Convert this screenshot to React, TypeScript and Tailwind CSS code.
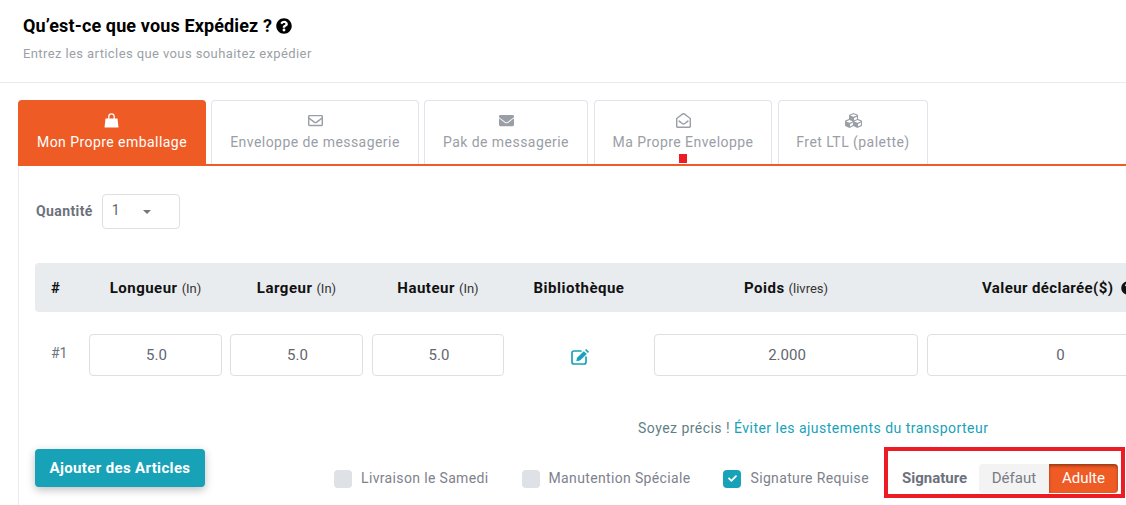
import { FaCheck, FaCubes, FaEnvelope, FaQuestionCircle, FaRegEnvelope, FaRegEnvelopeOpen } from "react-icons/fa";
import type { ReactNode } from "react";

function BagIcon() {
  return (
    <svg width="15" height="15" viewBox="0 0 15 15" fill="none" className="-ml-[1px]">
      <path d="M4.8 6V3.6a2.7 2.7 0 0 1 5.4 0V6" stroke="currentColor" strokeWidth="1.3" />
      <path d="M1.5 5.5h12l1 9H.5z" fill="currentColor" />
    </svg>
  );
}

function EditIcon() {
  return (
    <svg width="20" height="16" viewBox="0 0 20 16" fill="none">
      <path
        d="M11 2H4a2 2 0 0 0-2 2v9a2 2 0 0 0 2 2h10a2 2 0 0 0 2-2V8"
        stroke="currentColor"
        strokeWidth="1.7"
        strokeLinecap="round"
      />
      <path d="M13.8 2.2 16.8 5 10 11.6l-3.7.7.7-3.6z" fill="currentColor" />
      <path d="M15 1l1.2-1 2.8 2.7-1.1 1.2z" fill="currentColor" />
    </svg>
  );
}

const tabs: { label: string; icon: ReactNode; width: string; active?: boolean }[] = [
  { label: "Mon Propre emballage", icon: <BagIcon />, width: "w-[188px]", active: true },
  { label: "Enveloppe de messagerie", icon: <FaRegEnvelope size={15} />, width: "w-[208px]" },
  { label: "Pak de messagerie", icon: <FaEnvelope size={15} />, width: "w-[164px] mr-[1px]" },
  { label: "Ma Propre Enveloppe", icon: <FaRegEnvelopeOpen size={15} />, width: "w-[178px] mr-[1px]" },
  { label: "Fret LTL (palette)", icon: <FaCubes size={17} />, width: "w-[150px]" },
];

function Tab({ label, icon, width, active }: { label: string; icon: ReactNode; width: string; active?: boolean }) {
  return (
    <div
      className={`${width} h-[64px] shrink-0 rounded-t-[4px] flex flex-col items-center text-[14px] tracking-[0.45px] ${
        active ? "pt-[12px] bg-[#ef5b25] text-white" : "pt-[11px] border border-b-0 border-[#e1e4ea] text-[#9a9ea6]"
      }`}
    >
      <div className="h-[17px] flex items-center">{icon}</div>
      <div className="mt-[3px] leading-[20px] whitespace-nowrap">{label}</div>
    </div>
  );
}

function HeadCell({ title, unit, width }: { title: string; unit?: string; width: string }) {
  return (
    <div className={`${width} shrink-0 text-center whitespace-nowrap text-[15px] tracking-[0.5px] font-bold text-[#111]`}>
      {title}
      {unit && <span className="ml-1 text-[13px] tracking-normal font-normal text-[#333]">{unit}</span>}
    </div>
  );
}

function Field({ value, width }: { value: string; width: string }) {
  return (
    <div className={`${width} h-[42px] shrink-0 rounded-[4px] border border-[#dfdfdf] flex items-center justify-center text-[15px] text-[#5f6670]`}>
      {value}
    </div>
  );
}

function Check({ label, checked }: { label: string; checked?: boolean }) {
  return (
    <div className="flex items-center gap-[9px] whitespace-nowrap text-[14px] tracking-[0.35px] text-[#7d828c]">
      <div
        className={`w-[18px] h-[18px] rounded-[4px] flex items-center justify-center text-white ${
          checked ? "bg-[#17a2b8]" : "bg-[#dee1e6]"
        }`}
      >
        {checked && <FaCheck size={9} />}
      </div>
      {label}
    </div>
  );
}

export default function App() {
  return (
    <div className="relative w-[1126px] h-[505px] overflow-hidden bg-white font-['Roboto',sans-serif]">
      {/* Header */}
      <div className="h-[83px] border-b border-[#e9ebee] pl-[23px] pt-[15px]">
        <div className="flex items-center gap-[4px] text-[18px] tracking-[0.13px] font-bold leading-[22px] text-black">
          Qu’est-ce que vous Expédiez ?
          <FaQuestionCircle size={16} />
        </div>
        <div className="mt-[7px] text-[13px] tracking-[0.4px] leading-[20px] text-[#9b9fa6]">
          Entrez les articles que vous souhaitez expédier
        </div>
      </div>

      {/* Tabs */}
      <div className="mt-[17px] ml-[18px] flex gap-[5px] border-b-2 border-[#ef5b25]">
        {tabs.map((t) => (
          <Tab key={t.label} {...t} />
        ))}
      </div>

      {/* Panel */}
      <div className="ml-[18px] h-[340px] border-l border-[#e9ebee] pl-[16px] pt-[28px]">
        <div className="flex items-center gap-[9px]">
          <div className="ml-[1px] text-[14px] tracking-[0.4px] font-bold text-[#6c727c]">Quantité</div>
          <div className="w-[78px] h-[35px] rounded-[4px] border border-[#dfdfdf] flex items-center pl-[9px] text-[14px] text-[#5f6670]">
            <span className="-mt-[2px]">1</span>
            <span className="ml-[23px] w-0 h-0 border-x-[4px] border-t-[4px] border-x-transparent border-t-[#777]" />
          </div>
        </div>

        {/* Table */}
        <div className="mt-[34px] h-[49px] w-[1200px] rounded-l-[4px] bg-[#e9ecef] pt-[1px] flex items-center">
          <div className="w-[54px] shrink-0 pl-[16px] text-[15px] font-bold text-[#111]">#</div>
          <HeadCell title="Longueur" unit="(In)" width="w-[133px]" />
          <div className="w-[8px] shrink-0" />
          <HeadCell title="Largeur" unit="(In)" width="w-[133px]" />
          <div className="w-[9px] shrink-0" />
          <HeadCell title="Hauteur" unit="(In)" width="w-[132px]" />
          <HeadCell title="Bibliothèque" width="w-[150px]" />
          <HeadCell title="Poids" unit="(livres)" width="w-[264px]" />
          <div className="w-[9px] shrink-0" />
          <div className="w-[199px] shrink-0 pl-[55px] whitespace-nowrap text-[15px] tracking-[0.4px] font-bold text-[#111] flex items-center">
            Valeur déclarée($)
            <FaQuestionCircle size={14} className="ml-[8px] shrink-0" />
          </div>
        </div>

        <div className="mt-[22px] w-[1200px] flex items-center">
          <div className="w-[54px] shrink-0 pl-[16px] -mt-[4px] text-[14px] text-[#6c757d]">#1</div>
          <Field value="5.0" width="w-[133px] pl-[2px]" />
          <div className="w-[8px] shrink-0" />
          <Field value="5.0" width="w-[133px] pl-[2px]" />
          <div className="w-[9px] shrink-0" />
          <Field value="5.0" width="w-[132px] pl-[2px]" />
          <div className="w-[150px] shrink-0 flex justify-center pl-[2px] pt-[4px] text-[#17a2b8]">
            <EditIcon />
          </div>
          <Field value="2.000" width="w-[264px] pl-[2px]" />
          <div className="w-[9px] shrink-0" />
          <Field value="0" width="w-[267px]" />
        </div>

        <div className="mt-[42px] pl-[603px] whitespace-nowrap text-[14px] tracking-[0.47px] leading-[20px] text-[#5f7f86]">
          Soyez précis ! <span className="text-[#17a2b8]">Éviter les ajustements du transporteur</span>
        </div>

        {/* Footer row */}
        <div className="mt-[11px] flex items-start">
          <div className="w-[170px] h-[38px] shrink-0 rounded-[4px] bg-[#17a2b8] shadow-[0_3px_8px_rgba(0,0,0,0.25)] flex items-center justify-center text-[15px] font-bold tracking-[0.35px] text-white">
            Ajouter des Articles
          </div>
          <div className="ml-[129px] mt-[19px] flex gap-[33px]">
            <Check label="Livraison le Samedi" />
            <Check label="Manutention Spéciale" />
            <Check label="Signature Requise" checked />
          </div>
          <div className="ml-[33px] mt-[15px] flex items-center">
            <div className="w-[77px] text-[15px] font-bold text-[#6c727c]">Signature</div>
            <div className="w-[70px] h-[29px] rounded-l-[4px] bg-[#f3f3f3] flex items-center justify-center text-[15px] text-[#777c85]">
              Défaut
            </div>
            <div className="w-[69px] h-[29px] rounded-r-[4px] bg-[#ef5b25] shadow-[inset_0_2px_3px_rgba(0,0,0,0.35)] flex items-center justify-center text-[15px] text-white">
              Adulte
            </div>
          </div>
        </div>
      </div>

      {/* Annotations drawn over the screenshot */}
      <div className="absolute left-[679px] top-[154px] w-[8px] h-[9px] bg-[#ed1c24]" />
      <div className="absolute left-[884px] top-[447px] w-[241px] h-[51px] border-[4px] border-[#ed1c24]" />
    </div>
  );
}
